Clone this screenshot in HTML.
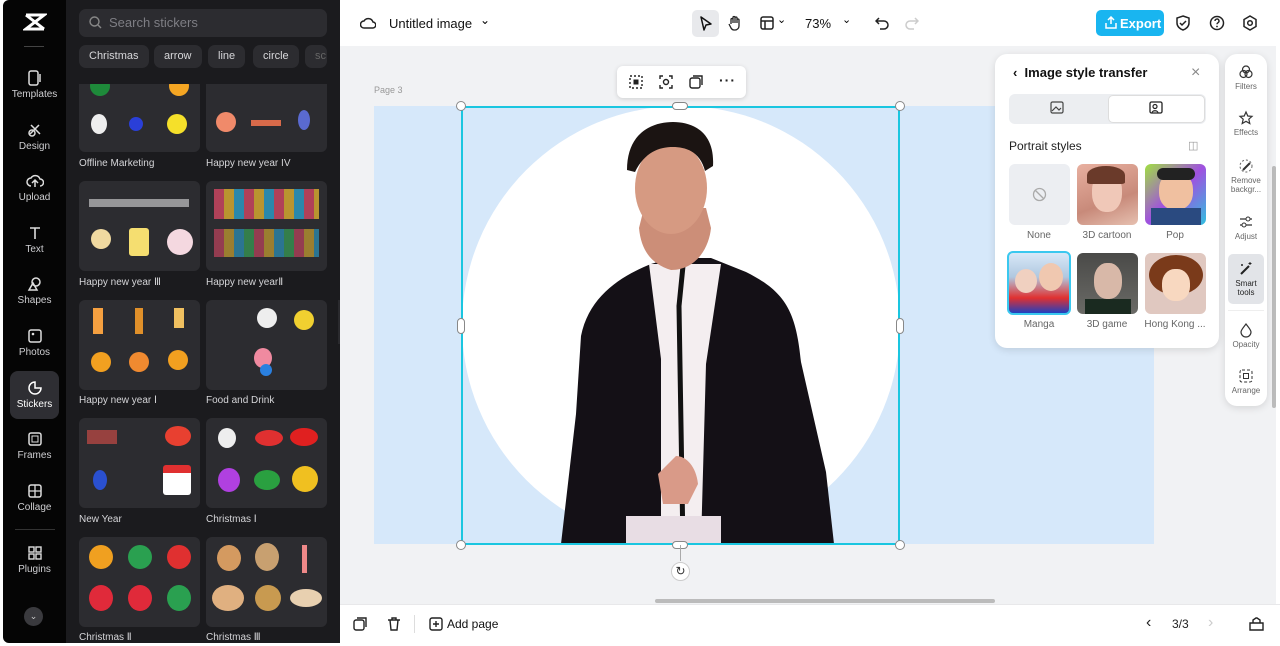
<!DOCTYPE html>
<html><head><meta charset="utf-8"><style>
*{box-sizing:border-box;margin:0;padding:0}
body{width:1280px;height:646px;overflow:hidden;background:#fff;font-family:"Liberation Sans",sans-serif;position:relative}
.rail{position:absolute;left:3px;top:0;width:63px;height:643px;background:#050505;border-radius:6px 0 0 6px}
.ri{position:absolute;left:0;width:63px;text-align:center;color:#cfcfd2;font-size:10px}
.ri svg{display:block;margin:0 auto 3px}
.panel{position:absolute;left:66px;top:0;width:274px;height:643px;background:#1b1b1e}
.search{position:absolute;left:13px;top:9px;width:248px;height:28px;background:#2c2c30;border-radius:7px;color:#7e7e84;font-size:13px;padding:6px 0 0 30px}
.chip{position:absolute;top:45px;height:23px;background:#2c2c30;border-radius:7px;color:#d7d7da;font-size:11px;padding:5px 10px 0}
.card{position:absolute;width:121px;height:90px;background:#2c2c30;border-radius:6px;overflow:hidden}
.lbl{position:absolute;color:#d5d5d8;font-size:10px}
.dot{position:absolute;width:20px;height:20px;border-radius:50%}
.top{position:absolute;left:340px;top:0;width:940px;height:46px;background:#fff}
.canvas{position:absolute;left:340px;top:46px;width:936px;height:558px;background:#f1f2f4}
.bottom{position:absolute;left:340px;top:604px;width:940px;height:40px;background:#fff;border-top:1px solid #e8e8ea}
.h{position:absolute;width:10px;height:10px;border-radius:50%;background:#fff;border:1px solid #888}
.sp{position:absolute;background:#fff;border-radius:12px;box-shadow:0 2px 8px rgba(0,0,0,.12)}
.rt{position:absolute;left:0;width:42px;text-align:center;font-size:8px;color:#666;line-height:9px}
.th{position:absolute;width:61px;height:61px;border-radius:6px;overflow:hidden}
.tl{position:absolute;font-size:10px;color:#666;width:70px;text-align:center}
</style></head><body>
<div class="rail">
 <div class="ri" style="top:12px"><svg width="24" height="20" viewBox="0 0 24 20"><path d="M3 3h18L3 17h18M3 3l18 14" stroke="#fff" stroke-width="3" fill="none"/></svg></div>
 <div style="position:absolute;left:21px;top:46px;width:20px;height:1px;background:#444"></div>
 <div class="ri" style="top:70px"><svg width="16" height="16"><rect x="2" y="1" width="9" height="14" rx="2" stroke="#ddd" fill="none" stroke-width="1.5"/><path d="M13 4v8" stroke="#ddd" stroke-width="1.5"/></svg>Templates</div>
 <div class="ri" style="top:122px"><svg width="16" height="16"><circle cx="5" cy="11" r="3" stroke="#ddd" fill="none" stroke-width="1.5"/><path d="M4 3l9 9M12 3L3 12" stroke="#ddd" stroke-width="1.5"/></svg>Design</div>
 <div class="ri" style="top:173px"><svg width="18" height="16"><path d="M5 13a4 4 0 010-8 5 5 0 019 1 3.5 3.5 0 010 7M9 14V8M6 10l3-3 3 3" stroke="#ddd" fill="none" stroke-width="1.5"/></svg>Upload</div>
 <div class="ri" style="top:225px"><svg width="16" height="16"><path d="M3 3h10M8 3v11" stroke="#ddd" stroke-width="1.6"/></svg>Text</div>
 <div class="ri" style="top:276px"><svg width="16" height="16"><circle cx="9" cy="6" r="4" stroke="#ddd" fill="none" stroke-width="1.5"/><path d="M2 14l4-7 4 7z" stroke="#ddd" fill="none" stroke-width="1.5"/></svg>Shapes</div>
 <div class="ri" style="top:328px"><svg width="16" height="16"><rect x="2" y="2" width="12" height="12" rx="2" stroke="#ddd" fill="none" stroke-width="1.5"/><circle cx="6" cy="6" r="1.3" fill="#ddd"/></svg>Photos</div>
 <div style="position:absolute;left:7px;top:371px;width:49px;height:48px;background:#2e2e33;border-radius:8px"></div>
 <div class="ri" style="top:380px;color:#fff"><svg width="16" height="16"><path d="M8 2a6 6 0 106 6H8z" stroke="#fff" fill="none" stroke-width="1.5"/></svg>Stickers</div>
 <div class="ri" style="top:431px"><svg width="16" height="16"><rect x="2" y="2" width="12" height="12" rx="2" stroke="#ddd" fill="none" stroke-width="1.5"/><rect x="5" y="5" width="6" height="6" stroke="#ddd" fill="none"/></svg>Frames</div>
 <div class="ri" style="top:483px"><svg width="16" height="16"><rect x="2" y="2" width="12" height="12" rx="2" stroke="#ddd" fill="none" stroke-width="1.5"/><path d="M8 2v12M2 8h12" stroke="#ddd" stroke-width="1.3"/></svg>Collage</div>
 <div style="position:absolute;left:12px;top:529px;width:40px;height:1px;background:#333"></div>
 <div class="ri" style="top:545px"><svg width="16" height="16"><g stroke="#ddd" fill="none" stroke-width="1.4"><rect x="2" y="2" width="5" height="5"/><rect x="9" y="2" width="5" height="5"/><rect x="2" y="9" width="5" height="5"/><rect x="9" y="9" width="5" height="5"/></g></svg>Plugins</div>
 <div style="position:absolute;left:21px;top:607px;width:19px;height:19px;border-radius:50%;background:#3a3a3e;color:#ccc;font-size:9px;text-align:center;line-height:19px">⌄</div>
</div>
<div class="panel">
 <div class="search"><svg style="position:absolute;left:10px;top:7px" width="13" height="13"><circle cx="5.5" cy="5.5" r="4.5" stroke="#888" fill="none" stroke-width="1.4"/><path d="M9 9l3 3" stroke="#888" stroke-width="1.4"/></svg>Search stickers</div>
 <div class="chip" style="left:13px">Christmas</div><div class="chip" style="left:88px">arrow</div><div class="chip" style="left:142px">line</div><div class="chip" style="left:187px">circle</div><div class="chip" style="left:239px;width:22px;color:#666">sc</div>
 <div class="card" style="left:13px;top:62px;clip-path:inset(22px 0 0 0)"><div class="dot" style="left:11px;top:14px;background:#1e8a3a"></div><div class="dot" style="left:90px;top:14px;background:#f5a623"></div><div class="dot" style="left:12px;top:52px;background:#eee;width:16px"></div><div class="dot" style="left:50px;top:55px;background:#2a3fd8;width:14px;height:14px"></div><div class="dot" style="left:88px;top:52px;background:#f5e02a"></div></div>
 <div class="card" style="left:140px;top:62px;clip-path:inset(22px 0 0 0)"><div class="dot" style="left:10px;top:50px;background:#f08a6a"></div><div style="position:absolute;left:45px;top:58px;width:30px;height:6px;background:#d86a4a"></div><div class="dot" style="left:92px;top:48px;background:#5a6ad0;width:12px"></div></div>
 <div class="lbl" style="left:13px;top:158px">Offline Marketing</div><div class="lbl" style="left:140px;top:158px">Happy new year IV</div>
 <div class="card" style="left:13px;top:181px"><div class="dot" style="left:12px;top:48px;background:#f0d9a0"></div><div style="position:absolute;left:50px;top:47px;width:20px;height:28px;background:#f5de70;border-radius:3px"></div><div class="dot" style="left:88px;top:48px;background:#f4d8e0;width:26px;height:26px"></div><div style="position:absolute;left:10px;top:18px;width:100px;height:8px;background:#ddd;opacity:.6"></div></div>
 <div class="card" style="left:140px;top:181px"><div style="position:absolute;left:8px;top:8px;width:105px;height:30px;background:repeating-linear-gradient(90deg,#e84a6a 0 10px,#f5c030 10px 20px,#2ab0e0 20px 30px);opacity:.7"></div><div style="position:absolute;left:8px;top:48px;width:105px;height:28px;background:repeating-linear-gradient(90deg,#e84a6a 0 10px,#f5c030 10px 20px,#2ab0e0 20px 30px,#3ac060 30px 40px);opacity:.55"></div></div>
 <div class="lbl" style="left:13px;top:277px">Happy new year Ⅲ</div><div class="lbl" style="left:140px;top:277px">Happy new yearⅡ</div>
 <div class="card" style="left:13px;top:300px"><div style="position:absolute;left:14px;top:8px;width:10px;height:26px;background:#f5a040"></div><div style="position:absolute;left:56px;top:8px;width:8px;height:26px;background:#e0902a"></div><div style="position:absolute;left:95px;top:8px;width:10px;height:20px;background:#f0c060"></div><div class="dot" style="left:12px;top:52px;background:#f2a020"></div><div class="dot" style="left:50px;top:52px;background:#f08a30"></div><div class="dot" style="left:89px;top:50px;background:#f2a020"></div></div>
 <div class="card" style="left:140px;top:300px"><div class="dot" style="left:51px;top:8px;background:#eee"></div><div class="dot" style="left:88px;top:10px;background:#f0d030"></div><div class="dot" style="left:48px;top:48px;background:#f08aa0;width:18px"></div><div class="dot" style="left:54px;top:64px;background:#2a80e0;width:12px;height:12px"></div></div>
 <div class="lbl" style="left:13px;top:395px">Happy new year Ⅰ</div><div class="lbl" style="left:140px;top:395px">Food and Drink</div>
 <div class="card" style="left:13px;top:418px"><div style="position:absolute;left:8px;top:12px;width:30px;height:14px;background:#e0504a;opacity:.6"></div><div class="dot" style="left:86px;top:8px;background:#e84030;width:26px"></div><div class="dot" style="left:14px;top:52px;background:#2a50d0;width:14px"></div><div style="position:absolute;left:84px;top:47px;width:28px;height:30px;background:#fff;border-top:8px solid #e03030;border-radius:3px"></div></div>
 <div class="card" style="left:140px;top:418px"><div class="dot" style="left:12px;top:10px;background:#eee;width:18px"></div><div class="dot" style="left:49px;top:12px;background:#e03030;width:28px;height:16px"></div><div class="dot" style="left:84px;top:10px;background:#e02020;width:28px;height:18px"></div><div class="dot" style="left:12px;top:50px;background:#b040e0;width:22px;height:24px"></div><div class="dot" style="left:48px;top:52px;background:#2aa040;width:26px"></div><div class="dot" style="left:86px;top:48px;background:#f0c020;width:26px;height:26px"></div></div>
 <div class="lbl" style="left:13px;top:514px">New Year</div><div class="lbl" style="left:140px;top:514px">Christmas Ⅰ</div>
 <div class="card" style="left:13px;top:537px"><div class="dot" style="left:10px;top:8px;background:#f0a020;width:24px;height:24px"></div><div class="dot" style="left:49px;top:8px;background:#2aa050;width:24px;height:24px"></div><div class="dot" style="left:88px;top:8px;background:#e03030;width:24px;height:24px"></div><div class="dot" style="left:10px;top:48px;background:#e02a3a;width:24px;height:26px"></div><div class="dot" style="left:49px;top:48px;background:#e02a3a;width:24px;height:26px"></div><div class="dot" style="left:88px;top:48px;background:#2aa050;width:24px;height:26px"></div></div>
 <div class="card" style="left:140px;top:537px"><div class="dot" style="left:11px;top:8px;background:#d49a60;width:24px;height:26px"></div><div class="dot" style="left:49px;top:6px;background:#c8a070;width:24px;height:28px"></div><div style="position:absolute;left:96px;top:8px;width:5px;height:28px;background:#e88"></div><div class="dot" style="left:6px;top:48px;background:#e0b080;width:32px;height:26px"></div><div class="dot" style="left:49px;top:48px;background:#c89a50;width:26px;height:26px"></div><div class="dot" style="left:84px;top:52px;background:#e8d0b0;width:32px;height:18px"></div></div>
 <div class="lbl" style="left:13px;top:632px">Christmas Ⅱ</div><div class="lbl" style="left:140px;top:632px">Christmas Ⅲ</div>
</div>
<div style="position:absolute;left:338px;top:300px;width:8px;height:44px;background:#2a2a2e;border-radius:0 6px 6px 0"></div>
<div class="top">
 <svg style="position:absolute;left:20px;top:16px" width="16" height="14"><path d="M4 12a3.5 3.5 0 010-7 5 5 0 019 1 3 3 0 01-.5 6z" stroke="#222" fill="none" stroke-width="1.5"/></svg>
 <div style="position:absolute;left:49px;top:16px;font-size:13px;color:#111">Untitled image</div>
 <div style="position:absolute;left:140px;top:13px;font-size:12px">⌄</div>
 <div style="position:absolute;left:352px;top:10px;width:27px;height:27px;background:#e8e9ec;border-radius:5px"></div>
 <svg style="position:absolute;left:359px;top:16px" width="14" height="16"><path d="M2 1l10 7-5 1-2 5z" stroke="#111" fill="none" stroke-width="1.5" stroke-linejoin="round"/></svg>
 <svg style="position:absolute;left:387px;top:15px" width="16" height="16"><path d="M4 9V4.5a1 1 0 012 0V8V2.5a1 1 0 012 0V8V3a1 1 0 012 0v5-3a1 1 0 012 0v6a4 4 0 01-4 4H7a4 4 0 01-3-2L2 9" stroke="#222" fill="none" stroke-width="1.3"/></svg>
 <svg style="position:absolute;left:420px;top:16px" width="14" height="14"><rect x="1" y="1" width="12" height="12" rx="2" stroke="#222" fill="none" stroke-width="1.5"/><path d="M1 5h12M5 5v8" stroke="#222" stroke-width="1.5"/></svg>
 <div style="position:absolute;left:437px;top:13px;font-size:11px">⌄</div>
 <div style="position:absolute;left:465px;top:16px;font-size:13px;color:#111">73%</div>
 <div style="position:absolute;left:502px;top:13px;font-size:11px">⌄</div>
 <svg style="position:absolute;left:535px;top:16px" width="14" height="14"><path d="M4 2L1 5l3 3M1 5h8a4 4 0 010 8H5" stroke="#222" fill="none" stroke-width="1.5"/></svg>
 <svg style="position:absolute;left:565px;top:16px" width="14" height="14"><path d="M10 2l3 3-3 3M13 5H5a4 4 0 000 8h4" stroke="#ccc" fill="none" stroke-width="1.5"/></svg>
 <div style="position:absolute;left:756px;top:10px;width:68px;height:26px;background:#19b5f0;border-radius:5px;color:#fff;font-size:13px;font-weight:bold;padding:6px 0 0 24px">Export</div>
 <svg style="position:absolute;left:765px;top:16px" width="12" height="13"><path d="M6 8V1M3 4l3-3 3 3M1 7v5h10V7" stroke="#fff" fill="none" stroke-width="1.5"/></svg>
 <svg style="position:absolute;left:836px;top:15px" width="14" height="16"><path d="M7 1l6 2v5c0 3.5-3 6-6 7-3-1-6-3.5-6-7V3z M4 8l2 2 4-4" stroke="#222" fill="none" stroke-width="1.5"/></svg>
 <svg style="position:absolute;left:869px;top:15px" width="16" height="16"><circle cx="8" cy="8" r="6.5" stroke="#222" fill="none" stroke-width="1.5"/><path d="M6 6a2 2 0 113 1.7c-.8.4-1 .8-1 1.6" stroke="#222" fill="none" stroke-width="1.4"/><circle cx="8" cy="11.5" r=".9" fill="#222"/></svg>
 <svg style="position:absolute;left:902px;top:15px" width="16" height="16"><path d="M8 1l6 3.5v7L8 15l-6-3.5v-7z" stroke="#222" fill="none" stroke-width="1.5"/><circle cx="8" cy="8" r="2.3" stroke="#222" fill="none" stroke-width="1.5"/></svg>
</div>
<div class="canvas">
 <div style="position:absolute;left:34px;top:39px;font-size:9px;color:#999">Page 3</div>
 <div style="position:absolute;left:34px;top:60px;width:780px;height:438px;background:#d6e8fa"></div>
 <div style="position:absolute;left:121px;top:60px;width:439px;height:438px;overflow:hidden">
  <div style="position:absolute;left:1px;top:0;width:438px;height:438px;border-radius:50%;background:#fff"></div>
  <svg style="position:absolute;left:0;top:0" width="439" height="438">
   <path d="M120 230c8-40 40-60 70-72l20-6h40l35 14c40 20 50 40 55 90l25 110 8 72H100l15-130z" fill="#141016"/>
   <path d="M188 158l12 95v185h40l5-180 15-100z" fill="#f4eef0"/>
   <path d="M222 160l-4 40 4 240" stroke="#111" stroke-width="5" fill="none"/>
   <path d="M178 122c2 22 12 36 32 42 25 0 38-22 40-42l-5-20H183z" fill="#cc8e78"/>
   <ellipse cx="210" cy="82" rx="36" ry="46" fill="#d69a82"/>
   <path d="M166 64c0-38 26-48 46-48s42 10 40 44l-8 5c-5-20-20-24-32-24-14 0-28 5-38 25z" fill="#1b1412"/>
   <path d="M215 350c10 0 20 10 22 28l-10 20h-25l-5-30z" fill="#d99a88"/>
   <rect x="165" y="410" width="95" height="30" fill="#e8dde4"/>
  </svg>
 </div>
 <div style="position:absolute;left:121px;top:60px;width:439px;height:439px;border:2px solid #1ac6e0"></div>
 <div class="h" style="left:116px;top:55px"></div><div class="h" style="left:555px;top:55px"></div><div class="h" style="left:116px;top:494px"></div><div class="h" style="left:555px;top:494px"></div>
 <div style="position:absolute;left:332px;top:56px;width:16px;height:8px;border-radius:4px;background:#fff;border:1px solid #888"></div>
 <div style="position:absolute;left:332px;top:495px;width:16px;height:8px;border-radius:4px;background:#fff;border:1px solid #888"></div>
 <div style="position:absolute;left:117px;top:272px;width:8px;height:16px;border-radius:4px;background:#fff;border:1px solid #888"></div>
 <div style="position:absolute;left:556px;top:272px;width:8px;height:16px;border-radius:4px;background:#fff;border:1px solid #888"></div>
 <div style="position:absolute;left:340px;top:499px;width:1px;height:16px;background:#aaa"></div>
 <div style="position:absolute;left:331px;top:516px;width:19px;height:19px;border-radius:50%;background:#fff;border:1px solid #ccc;font-size:12px;text-align:center;line-height:17px;color:#333">↻</div>
 <div style="position:absolute;left:277px;top:20px;width:129px;height:32px;background:#fff;border-radius:6px;box-shadow:0 1px 5px rgba(0,0,0,.15)">
  <svg style="position:absolute;left:12px;top:9px" width="14" height="14"><rect x="1" y="1" width="12" height="12" stroke="#222" stroke-dasharray="2 2" fill="none" stroke-width="1.4"/><rect x="4.5" y="4.5" width="5" height="5" fill="#222"/></svg>
  <svg style="position:absolute;left:42px;top:9px" width="14" height="14"><path d="M1 4V1h3M10 1h3v3M13 10v3h-3M4 13H1v-3" stroke="#222" fill="none" stroke-width="1.4"/><circle cx="7" cy="7" r="2.5" stroke="#222" fill="none" stroke-width="1.4"/></svg>
  <svg style="position:absolute;left:72px;top:9px" width="14" height="14"><rect x="1" y="3" width="10" height="10" rx="2" stroke="#222" fill="none" stroke-width="1.4"/><path d="M4 1h9v9" stroke="#222" fill="none" stroke-width="1.4"/></svg>
  <div style="position:absolute;left:102px;top:6px;font-size:14px;font-weight:bold;color:#222;letter-spacing:1px">···</div>
 </div>
 <div style="position:absolute;left:315px;top:553px;width:340px;height:4px;border-radius:2px;background:#bbb"></div>
 <div style="position:absolute;left:932px;top:120px;width:4px;height:242px;border-radius:2px;background:#bbb"></div>
</div>
<div class="sp" style="left:995px;top:54px;width:224px;height:294px">
 <div style="position:absolute;left:18px;top:11px;font-size:13px;font-weight:bold;color:#111">‹&nbsp; Image style transfer</div>
 <div style="position:absolute;left:196px;top:10px;font-size:16px;color:#888">×</div>
 <div style="position:absolute;left:14px;top:40px;width:197px;height:30px;background:#eceef1;border-radius:6px"></div>
 <div style="position:absolute;left:113px;top:41px;width:97px;height:28px;background:#fff;border-radius:5px;border:1px solid #ddd"></div>
 <svg style="position:absolute;left:55px;top:47px" width="15" height="14"><rect x="1" y="1" width="12" height="11" rx="1.5" stroke="#444" fill="none" stroke-width="1.2"/><path d="M2 10l4-4 3 3 2-2" stroke="#444" fill="none" stroke-width="1.2"/></svg>
 <svg style="position:absolute;left:154px;top:47px" width="15" height="14"><rect x="1" y="1" width="12" height="11" rx="1.5" stroke="#222" fill="none" stroke-width="1.3"/><circle cx="6" cy="5.5" r="2" stroke="#222" fill="none" stroke-width="1.2"/><path d="M3 12c0-3 6-3 6 0" stroke="#222" fill="none" stroke-width="1.2"/></svg>
 <div style="position:absolute;left:14px;top:85px;font-size:12px;color:#222">Portrait styles</div>
 <div style="position:absolute;left:193px;top:85px;font-size:11px;color:#999">◫</div>
 <div class="th" style="left:14px;top:110px;background:#eceef2"><svg style="position:absolute;left:23px;top:23px" width="15" height="15"><circle cx="7.5" cy="7.5" r="6" stroke="#aaa" fill="none" stroke-width="1.3"/><path d="M3.5 3.5l8 8" stroke="#aaa" stroke-width="1.3"/></svg></div>
 <div class="th" style="left:82px;top:110px;background:linear-gradient(160deg,#e8b0a0,#c88a7a 60%,#e6c0b0)"><div style="position:absolute;left:15px;top:8px;width:30px;height:40px;border-radius:45%;background:#f0c8b8"></div><div style="position:absolute;left:10px;top:2px;width:38px;height:18px;border-radius:50% 50% 10% 10%;background:#6a3a2a"></div></div>
 <div class="th" style="left:150px;top:110px;background:linear-gradient(135deg,#a0e040,#a050e0 50%,#30c0e0)"><div style="position:absolute;left:14px;top:8px;width:34px;height:38px;border-radius:45%;background:#f0c0a0"></div><div style="position:absolute;left:12px;top:4px;width:38px;height:12px;border-radius:6px;background:#222"></div><div style="position:absolute;left:6px;top:44px;width:50px;height:20px;background:#2a4a80"></div></div>
 <div class="tl" style="left:9px;top:176px">None</div><div class="tl" style="left:77px;top:176px">3D cartoon</div><div class="tl" style="left:145px;top:176px">Pop</div>
 <div class="th" style="left:12px;top:197px;width:64px;height:64px;border:2px solid #3ac8ef;background:linear-gradient(180deg,#d8e8f8,#b0c8e0 40%,#e03030 75%,#2040c0)"><div style="position:absolute;left:6px;top:16px;width:22px;height:24px;border-radius:50%;background:#f0d0c0"></div><div style="position:absolute;left:30px;top:10px;width:24px;height:28px;border-radius:50%;background:#f0c8b0"></div></div>
 <div class="th" style="left:82px;top:199px;background:linear-gradient(#4a4a48,#6a6a66)"><div style="position:absolute;left:17px;top:10px;width:28px;height:36px;border-radius:45%;background:#d8b8a8"></div><div style="position:absolute;left:8px;top:46px;width:46px;height:20px;background:#1a2a20"></div></div>
 <div class="th" style="left:150px;top:199px;background:#e0c8c0"><div style="position:absolute;left:4px;top:2px;width:54px;height:40px;border-radius:50%;background:#7a3a1a"></div><div style="position:absolute;left:17px;top:16px;width:28px;height:32px;border-radius:45%;background:#f8d8c0"></div></div>
 <div class="tl" style="left:9px;top:265px">Manga</div><div class="tl" style="left:77px;top:265px">3D game</div><div class="tl" style="left:145px;top:265px">Hong Kong ...</div>
</div>
<div class="sp" style="left:1225px;top:54px;width:42px;height:352px">
 <div class="rt" style="top:10px"><svg width="16" height="16" style="display:block;margin:0 auto 2px"><g stroke="#333" fill="none" stroke-width="1.2"><circle cx="8" cy="5.5" r="3.5"/><circle cx="5.5" cy="10" r="3.5"/><circle cx="10.5" cy="10" r="3.5"/></g></svg>Filters</div>
 <div class="rt" style="top:56px"><svg width="16" height="16" style="display:block;margin:0 auto 2px"><path d="M8 2l1.8 4 4.2.4-3.2 2.8 1 4.3L8 11.3 4.2 13.5l1-4.3L2 6.4l4.2-.4z" stroke="#333" fill="none" stroke-width="1.2"/></svg>Effects</div>
 <div class="rt" style="top:104px"><svg width="16" height="16" style="display:block;margin:0 auto 2px"><circle cx="8" cy="8" r="6" stroke="#666" stroke-dasharray="2 2" fill="none"/><path d="M5 12l7-7" stroke="#333" stroke-width="2"/></svg>Remove<br>backgr...</div>
 <div class="rt" style="top:160px"><svg width="16" height="16" style="display:block;margin:0 auto 2px"><path d="M2 5h12M2 11h12" stroke="#333" stroke-width="1.3"/><circle cx="10" cy="5" r="2" fill="#fff" stroke="#333"/><circle cx="6" cy="11" r="2" fill="#fff" stroke="#333"/></svg>Adjust</div>
 <div style="position:absolute;left:3px;top:200px;width:36px;height:50px;background:#e2e4e8;border-radius:5px"></div>
 <div class="rt" style="top:207px;color:#222"><svg width="16" height="16" style="display:block;margin:0 auto 2px"><path d="M3 13l8-8" stroke="#222" stroke-width="2"/><path d="M12 1v3M10.5 2.5h3M4 3v2M3 4h2" stroke="#222"/></svg>Smart<br>tools</div>
 <div style="position:absolute;left:3px;top:256px;width:36px;height:1px;background:#eee"></div>
 <div class="rt" style="top:268px"><svg width="16" height="16" style="display:block;margin:0 auto 2px"><path d="M8 2c3 4 5 6 5 8a5 5 0 01-10 0c0-2 2-4 5-8z" stroke="#333" fill="none" stroke-width="1.2"/></svg>Opacity</div>
 <div class="rt" style="top:314px"><svg width="16" height="16" style="display:block;margin:0 auto 2px"><rect x="2" y="2" width="12" height="12" rx="2" stroke="#333" stroke-dasharray="3 2" fill="none"/><rect x="5.5" y="5.5" width="5" height="5" stroke="#333" fill="none"/></svg>Arrange</div>
</div>
<div class="bottom">
 <svg style="position:absolute;left:13px;top:12px" width="14" height="14"><rect x="1" y="3" width="10" height="10" rx="2" stroke="#222" fill="none" stroke-width="1.4"/><path d="M4 1h9v9" stroke="#222" fill="none" stroke-width="1.4"/></svg>
 <svg style="position:absolute;left:47px;top:12px" width="14" height="14"><path d="M1 3h12M5 3V1h4v2M3 3l1 10h6l1-10" stroke="#222" fill="none" stroke-width="1.4"/></svg>
 <div style="position:absolute;left:74px;top:10px;width:1px;height:18px;background:#ddd"></div>
 <svg style="position:absolute;left:89px;top:12px" width="15" height="15"><rect x="1" y="1" width="12" height="12" rx="2" stroke="#222" fill="none" stroke-width="1.4"/><path d="M7 4v6M4 7h6" stroke="#222" stroke-width="1.4"/></svg>
 <div style="position:absolute;left:107px;top:12px;font-size:12px;color:#111">Add page</div>
 <div style="position:absolute;left:806px;top:9px;font-size:16px;color:#222">‹</div>
 <div style="position:absolute;left:832px;top:12px;font-size:12px;color:#222">3/3</div>
 <div style="position:absolute;left:868px;top:9px;font-size:16px;color:#ccc">›</div>
 <svg style="position:absolute;left:909px;top:12px" width="15" height="14"><path d="M1 6h13v7H1zM4 6V3l3-2h1l3 2v3" stroke="#222" fill="none" stroke-width="1.4"/></svg>
</div>
</body></html>
